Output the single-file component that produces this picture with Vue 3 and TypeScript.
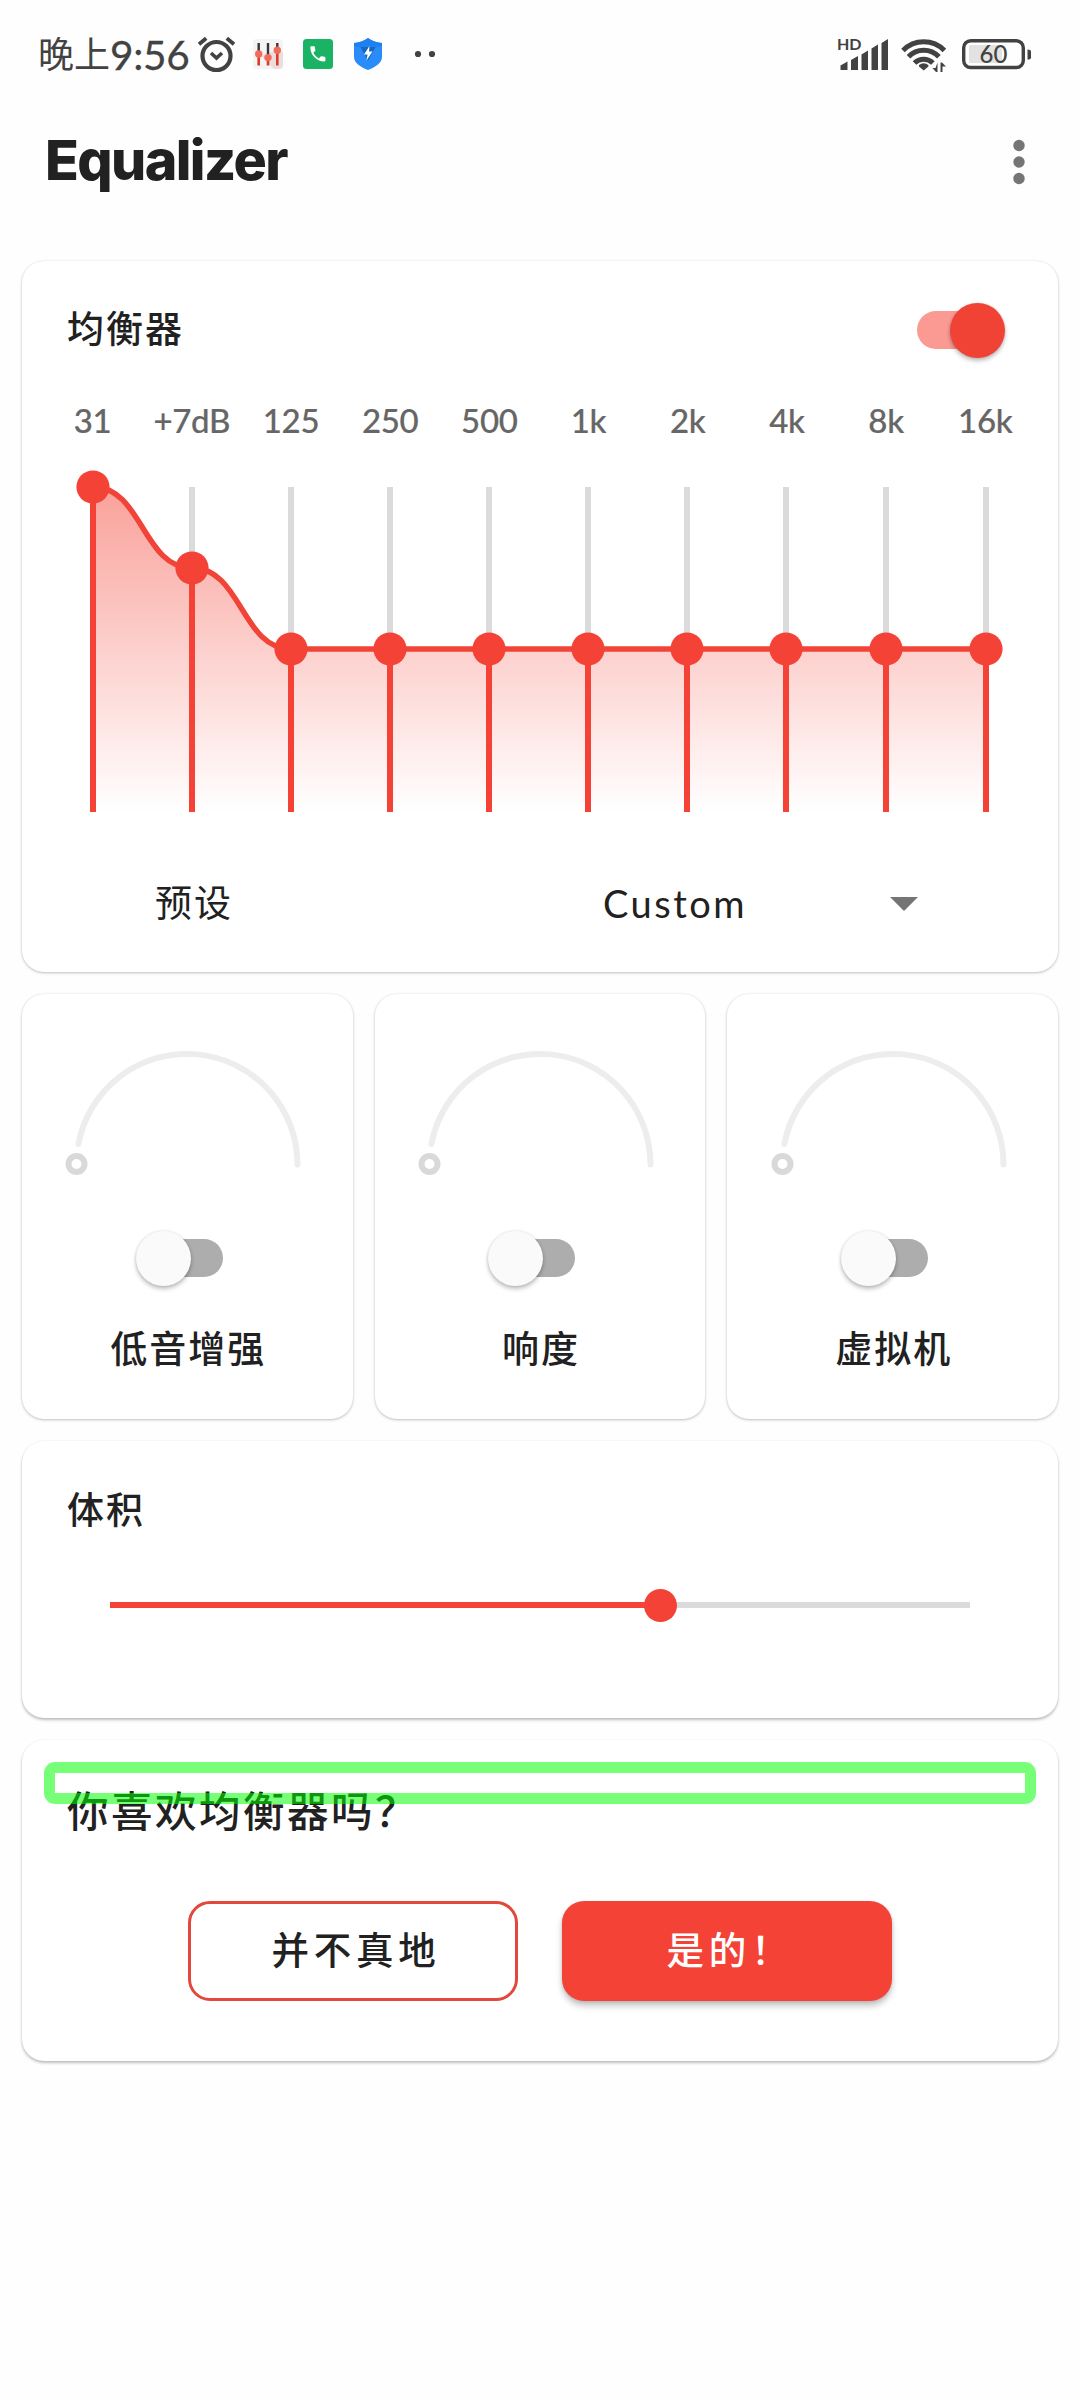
<script setup lang="ts">
interface Band {
  label: string
  x: number
  y: number
}

const TOP = 20
const BOTTOM = 345
const bands: Band[] = [
  { label: '31', x: 71, y: 20 },
  { label: '+7dB', x: 170, y: 101 },
  { label: '125', x: 269, y: 182 },
  { label: '250', x: 368, y: 182 },
  { label: '500', x: 467, y: 182 },
  { label: '1k', x: 566, y: 182 },
  { label: '2k', x: 665, y: 182 },
  { label: '4k', x: 764, y: 182 },
  { label: '8k', x: 864, y: 182 },
  { label: '16k', x: 964, y: 182 },
]

const curve = bands.reduce((path, b, i) => {
  if (i === 0) return `M${b.x} ${b.y}`
  const prev = bands[i - 1]
  const mid = (prev.x + b.x) / 2
  return `${path} C${mid} ${prev.y} ${mid} ${b.y} ${b.x} ${b.y}`
}, '')
const area = `${curve} V${BOTTOM} H${bands[0].x} Z`

const effects: string[] = ['低音增强', '响度', '虚拟机']
const volume = 64
</script>

<template>
  <div class="screen">
    <div class="status">
      <div class="clock"><span class="clock-cn">晚上</span><span class="clock-num">9:56</span></div>
      <svg class="status-left" width="244" height="40" viewBox="196 36 244 40">
        <g fill="none" stroke="#424242" stroke-linecap="round">
          <circle cx="216.5" cy="56" r="14" stroke-width="4.2" />
          <path d="M211 53l5.5 5 5.5-5" stroke-width="3.6" stroke-linecap="butt" />
          <path d="M199 44.3l7.2-6M234 44.3l-7.2-6" stroke-width="3.8" stroke-linecap="butt" />
        </g>
        <rect x="253" y="39" width="30" height="30" rx="4" fill="#f5f4f4" />
        <path d="M261 56l9 9 4 4h5q4 0 4-4V53l-4-4z" fill="#e9dedc" />
        <path d="M258.7 43v10M268 43v13M277.3 43v6" stroke="#3c3338" stroke-width="2.4" />
        <path d="M258.7 55v10.5M268 58v7.5M277.3 51v14.5" stroke="#df3a25" stroke-width="2.6" />
        <g fill="#f36a58">
          <circle cx="258.7" cy="54" r="3.7" />
          <circle cx="268" cy="57.6" r="3.7" />
          <circle cx="277.3" cy="50.3" r="3.7" />
        </g>
        <rect x="303" y="39" width="30" height="30" rx="3.5" fill="#1ab264" />
        <path transform="translate(307.8 43.8) scale(.84)" fill="#fff" d="M6.62 10.79c1.44 2.83 3.76 5.14 6.59 6.59l2.2-2.2c.27-.27.67-.36 1.02-.24 1.12.37 2.33.57 3.57.57.55 0 1 .45 1 1V20c0 .55-.45 1-1 1-9.39 0-17-7.61-17-17 0-.55.45-1 1-1h3.5c.55 0 1 .45 1 1 0 1.25.2 2.45.57 3.57.11.35.03.74-.25 1.02z" />
        <path d="M368 38c4 3 9 4.400 14 5v14c0 6-7 10.500-14 13-7-2.500-14-7-14-13V43c5-.6 10-2 14-5z" fill="#2a8cf8" />
        <path d="M368 38c4 3 9 4.400 14 5v3l-14 3-14-3v-3c5-.6 10-2 14-5z" fill="#1f80f0" />
        <path d="M360.500 47h15l-7.500 14z" fill="#1765c4" />
        <path d="M369.500 46l-5.500 8.500h3.500l-1 6 6-9h-3.500z" fill="#fff" />
        <g fill="#424242"><circle cx="418" cy="54" r="3.1" /><circle cx="432" cy="54" r="3.1" /></g>
      </svg>
      <svg class="status-right" width="200" height="52" viewBox="832 30 200 52">
        <text x="837" y="50" class="hd">HD</text>
        <g fill="#424242">
          <path d="M840.500 65.500l7-4V70h-7zM851 60l7-4v14h-7zM861.500 54.500l6.500-4V70h-6.500zM871.500 48.500l6.500-4V70h-6.500zM881.500 43l6.500-4V70h-6.500z" />
          <path d="M919 65q4.700-3.500 9.400 0v1.500l-4.700 4-4.700-4z" />
          <path d="M937.500 62.500v9.500h-1.500l-3.500-4h3zM940.500 72v-9.500h1.500l4 4h-3.500V72z" />
        </g>
        <g fill="none" stroke="#424242" stroke-width="5">
          <path d="M903 50.500a29 29 0 0 1 41.400 0" />
          <path d="M908.500 56.800a21 21 0 0 1 30.400 0" />
          <path d="M914.500 63a13 13 0 0 1 18.400 0" />
        </g>
        <rect x="969" y="45" width="33" height="18" rx="1.500" fill="#e2e2e2" />
        <rect x="963.700" y="40.700" width="59.600" height="26.800" rx="7" fill="none" stroke="#424242" stroke-width="3.400" />
        <path d="M1027.500 49.500q3.500 0 3.500 2v6q0 2-3.500 2z" fill="#424242" />
        <text x="993.500" y="62.700" class="battery">60</text>
      </svg>
    </div>

    <header class="header">
      <h1>Equalizer</h1>
      <svg width="12" height="46" viewBox="0 0 12 46" fill="#757575">
        <circle cx="6" cy="6.500" r="5.700" /><circle cx="6" cy="23" r="5.700" /><circle cx="6" cy="39.500" r="5.700" />
      </svg>
    </header>

    <main>
      <section class="card eq">
        <div class="eq-head">
          <h2>均衡器</h2>
          <span class="switch on"><i /></span>
        </div>
        <div class="labels">
          <span v-for="b in bands" :key="b.label">{{ b.label }}</span>
        </div>
        <svg class="chart" width="1036" height="350" viewBox="0 0 1036 350">
          <defs>
            <linearGradient id="fill" gradientUnits="userSpaceOnUse" x1="0" :y1="TOP" x2="0" :y2="BOTTOM">
              <stop offset="0" stop-color="#f44336" stop-opacity=".5" />
              <stop offset="1" stop-color="#f44336" stop-opacity="0" />
            </linearGradient>
          </defs>
          <line v-for="b in bands" :key="'t' + b.label" :x1="b.x" :x2="b.x" :y1="TOP" :y2="b.y" stroke="#dbdbdb" stroke-width="6" />
          <path :d="area" fill="url(#fill)" />
          <path :d="curve" fill="none" stroke="#f04438" stroke-width="5.500" />
          <g v-for="b in bands" :key="'b' + b.label">
            <line :x1="b.x" :x2="b.x" :y1="b.y" :y2="BOTTOM" stroke="#f44336" stroke-width="6" />
            <circle :cx="b.x" :cy="b.y" r="16.600" fill="#f44336" />
          </g>
        </svg>
        <div class="preset">
          <span class="preset-name">预设</span>
          <span class="preset-value">Custom</span>
          <svg width="28" height="14" viewBox="0 0 28 14"><path d="M0 0h28L14 14z" fill="#757575" /></svg>
        </div>
      </section>

      <div class="effects">
        <section v-for="name in effects" :key="name" class="card effect">
          <svg width="250" height="140" viewBox="0 0 250 140" fill="none" stroke-width="6">
            <path d="M16.400 104A110.500 110.500 0 0 1 235.500 124.500" stroke="#ededed" stroke-linecap="round" />
            <circle cx="14.500" cy="124" r="8" stroke="#d9d9d9" />
          </svg>
          <span class="switch"><i /></span>
          <h2>{{ name }}</h2>
        </section>
      </div>

      <section class="card low volume">
        <h2>体积</h2>
        <div class="track">
          <div class="progress" :style="{ width: volume + '%' }"><i /></div>
        </div>
      </section>

      <section class="card low rate">
        <div class="frame" />
        <h3>你喜欢均衡器吗？</h3>
        <div class="buttons">
          <button class="no">并不真地</button>
          <button class="yes">是的！</button>
        </div>
      </section>
    </main>
  </div>
</template>

<style>
body {
  margin: 0;
  background: #fefefe;
}
</style>

<style scoped>
.screen {
  width: 1080px;
  height: 2400px;
  box-sizing: border-box;
  background: #fefefe;
  color: #212121;
  font-family: Lato, "Noto Sans CJK SC", sans-serif;
  overflow: hidden;
}
.status {
  display: flex;
  align-items: center;
  height: 112px;
  padding: 0 48px 0 38px;
  color: #424242;
}
.clock {
  display: flex;
  align-items: center;
  width: 158px;
  height: 50px;
  white-space: nowrap;
}
.clock-cn {
  font-size: 36px;
  font-weight: 400;
  line-height: 50px;
  margin-top: -4px;
}
.clock-num {
  font-size: 40.500px;
  font-weight: 400;
  letter-spacing: -0.300px;
  line-height: 50px;
  margin-top: -2px;
  -webkit-text-stroke: 0.300px #424242;
}
.status-right {
  margin-left: auto;
}
.hd {
  font: 700 16px Lato, sans-serif;
  fill: #424242;
}
.battery {
  font: 500 24px Lato, sans-serif;
  fill: #424242;
  text-anchor: middle;
}
.header {
  display: flex;
  justify-content: space-between;
  align-items: center;
  height: 100px;
  padding: 0 55px 0 45px;
}
h1,
h2,
h3 {
  margin: 0;
}
h1 {
  margin-top: -4px;
  font-family: Inter, sans-serif;
  font-size: 55.500px;
  font-weight: 800;
  line-height: 80px;
  letter-spacing: -1.600px;
}
h2 {
  font-size: 37px;
  font-weight: 500;
  letter-spacing: 2px;
  line-height: 54px;
}
main {
  display: flex;
  flex-direction: column;
  gap: 22px;
  padding: 49px 22px 0;
}
.card {
  box-sizing: border-box;
  background: #fff;
  border-radius: 22px;
  box-shadow: 0 1px 3px rgba(0, 0, 0, 0.24), 0 0 2px rgba(0, 0, 0, 0.06);
}
.card.low {
  box-shadow: 0 2px 3px rgba(0, 0, 0, 0.25), 0 0 2px rgba(0, 0, 0, 0.07);
}
.eq {
  height: 711px;
  padding-top: 41px;
}
.eq-head {
  display: flex;
  align-items: center;
  justify-content: space-between;
  height: 54px;
  padding: 0 62px 0 45px;
}
.switch {
  display: flex;
  align-items: center;
  width: 79px;
  height: 38px;
  border-radius: 19px;
  background: #adadad;
}
.switch i {
  flex: none;
  width: 55px;
  height: 55px;
  margin-left: -8px;
  border-radius: 50%;
  background: #fafafa;
  box-shadow: 0 3px 4px rgba(0, 0, 0, 0.24), 0 0 3px rgba(0, 0, 0, 0.12);
}
.switch.on {
  margin-top: 2px;
  background: #fa9a93;
}
.switch.on i {
  margin-left: 32.500px;
  background: #f04336;
}
.labels {
  display: grid;
  grid-template-columns: repeat(10, 99.200px);
  height: 40px;
  margin: 44px 0 0 21px;
  font-size: 33px;
  font-weight: 500;
  line-height: 40px;
  text-align: center;
  color: #666;
  -webkit-text-stroke: 0.200px #666;
  letter-spacing: -0.300px;
}
.chart {
  display: block;
  margin-top: 27px;
}
.preset {
  display: flex;
  align-items: center;
  height: 54px;
  margin-top: 60px;
  padding-left: 133px;
  font-size: 37px;
}
.preset-name {
  width: 448px;
  margin-top: -2px;
  letter-spacing: 2px;
  line-height: 54px;
}
.preset-value {
  width: 287px;
  margin-top: -2px;
  font-size: 38px;
  letter-spacing: 2.500px;
  line-height: 54px;
}
.effects {
  display: grid;
  grid-template-columns: repeat(3, 1fr);
  gap: 22px;
}
.effect {
  display: flex;
  flex-direction: column;
  align-items: center;
  height: 425px;
  padding-top: 46px;
}
.effect .switch {
  margin: 59px 8px 0 0;
}
.effect h2 {
  margin-top: 45px;
  text-indent: 2px;
}
.volume {
  height: 277px;
  padding: 42px 88px 0 45px;
}
.track {
  height: 6px;
  margin: 65px 0 0 43px;
  background: #dbdbdb;
}
.progress {
  display: flex;
  align-items: center;
  justify-content: flex-end;
  height: 6px;
  background: #f44336;
}
.progress i {
  flex: none;
  width: 33px;
  height: 33px;
  margin-right: -16.500px;
  border-radius: 50%;
  background: #f44336;
}
.rate {
  position: relative;
  height: 321px;
  padding: 41px 0 0 45px;
}
.frame {
  position: absolute;
  inset: 22px 22px auto;
  height: 42px;
  box-sizing: border-box;
  border: 11px solid rgba(0, 255, 0, 0.53);
  border-radius: 11px;
}
h3 {
  font-size: 41.500px;
  font-weight: 500;
  letter-spacing: 2.500px;
  line-height: 60px;
}
.buttons {
  display: flex;
  gap: 44px;
  margin: 60px 0 0 121px;
}
button {
  width: 330px;
  height: 100px;
  box-sizing: border-box;
  padding: 0 0 8px 6px;
  border: 3px solid #e2483d;
  border-radius: 22px;
  background: #fff;
  color: #212121;
  font: 500 37.500px Lato, "Noto Sans CJK SC", sans-serif;
  letter-spacing: 4.800px;
}
.yes {
  border: 0;
  background: #f44336;
  color: #fff;
  box-shadow: 0 5px 6px rgba(0, 0, 0, 0.22), 0 1px 3px rgba(0, 0, 0, 0.12);
}
</style>
